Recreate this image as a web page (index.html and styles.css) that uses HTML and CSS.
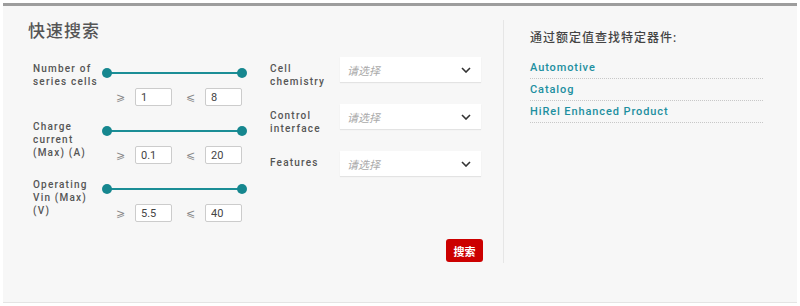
FILE: index.html
```html
<!DOCTYPE html>
<html lang="zh-CN">

<head>
    <meta charset="UTF-8">
    <meta name="viewport" content="width=device-width, initial-scale=1.0">
    <title>快速搜索</title>
    <link rel="stylesheet" href="styles.css">
</head>

<body>
    <div class="panel">
        <div class="main">
            <h2 class="title">快速搜索</h2>
            <div class="form">
                <div class="ranges">
                    <div class="range-row">
                        <div class="label">Number of<br>series cells</div>
                        <div class="range">
                            <div class="slider"><span class="dot"></span><span class="dot"></span></div>
                            <div class="limits">
                                <span class="sign">⩾</span><input type="text" value="1">
                                <span class="sign">⩽</span><input type="text" value="8">
                            </div>
                        </div>
                    </div>
                    <div class="range-row">
                        <div class="label">Charge<br>current<br>(Max) (A)</div>
                        <div class="range">
                            <div class="slider"><span class="dot"></span><span class="dot"></span></div>
                            <div class="limits">
                                <span class="sign">⩾</span><input type="text" value="0.1">
                                <span class="sign">⩽</span><input type="text" value="20">
                            </div>
                        </div>
                    </div>
                    <div class="range-row">
                        <div class="label">Operating<br>Vin (Max)<br>(V)</div>
                        <div class="range">
                            <div class="slider"><span class="dot"></span><span class="dot"></span></div>
                            <div class="limits">
                                <span class="sign">⩾</span><input type="text" value="5.5">
                                <span class="sign">⩽</span><input type="text" value="40">
                            </div>
                        </div>
                    </div>
                </div>

                <div class="selects">
                    <div class="select-row">
                        <div class="label">Cell<br>chemistry</div>
                        <div class="select">
                            <span class="placeholder">请选择</span>
                            <svg width="10" height="6" viewBox="0 0 10 6"><path d="M1 1l4 4 4-4" fill="none" stroke="#333" stroke-width="1.6"/></svg>
                        </div>
                    </div>
                    <div class="select-row">
                        <div class="label">Control<br>interface</div>
                        <div class="select">
                            <span class="placeholder">请选择</span>
                            <svg width="10" height="6" viewBox="0 0 10 6"><path d="M1 1l4 4 4-4" fill="none" stroke="#333" stroke-width="1.6"/></svg>
                        </div>
                    </div>
                    <div class="select-row">
                        <div class="label">Features</div>
                        <div class="select">
                            <span class="placeholder">请选择</span>
                            <svg width="10" height="6" viewBox="0 0 10 6"><path d="M1 1l4 4 4-4" fill="none" stroke="#333" stroke-width="1.6"/></svg>
                        </div>
                    </div>
                    <button class="search-btn">搜索</button>
                </div>
            </div>
        </div>

        <div class="side">
            <h3>通过额定值查找特定器件:</h3>
            <ul class="links">
                <li><a href="#">Automotive</a></li>
                <li><a href="#">Catalog</a></li>
                <li><a href="#">HiRel Enhanced Product</a></li>
            </ul>
        </div>
    </div>
</body>

</html>
```

FILE: styles.css
```css
body {
    margin: 0;
    background-color: #fff;
    font-family: Roboto, "Noto Sans CJK SC", sans-serif;
    color: #555;
}

.panel {
    display: flex;
    margin: 3px 3px 0;
    height: 296px;
    background-color: #f7f7f7;
    border-top: 3px solid #9d9d9d;
    border-bottom: 1px solid #e4e4e4;
}

.main {
    width: 500px;
    padding: 13px 0 0 25px;
    box-sizing: border-box;
}

.title {
    margin: 0;
    font-size: 17px;
    line-height: 24px;
    font-weight: 500;
    color: #555;
    letter-spacing: 1px;
}

.form {
    display: flex;
    margin-top: 14px;
}

.label {
    font-size: 10px;
    line-height: 13px;
    font-weight: 500;
    letter-spacing: 1.2px;
    color: #555;
}

/* range sliders */
.ranges {
    width: 237px;
    padding: 5px 0 0 5px;
}

.range-row {
    display: flex;
    height: 58px;
}

.range-row .label {
    width: 69px;
}

.range {
    padding-top: 6px;
}

.slider {
    position: relative;
    width: 145px;
    height: 10px;
    display: flex;
    justify-content: space-between;
    align-items: center;
}

.slider::before {
    content: "";
    position: absolute;
    left: 4px;
    right: 4px;
    top: 4px;
    height: 2px;
    background-color: #1b8e96;
}

.dot {
    position: relative;
    width: 10px;
    height: 10px;
    border-radius: 50%;
    background-color: #16878f;
}

.limits {
    display: flex;
    align-items: center;
    margin-top: 10px;
    padding-left: 14px;
}

.sign {
    width: 19px;
    font-family: "DejaVu Sans", sans-serif;
    font-size: 11px;
    color: #888;
}

.limits input {
    width: 37px;
    height: 18px;
    box-sizing: border-box;
    margin: 0 14px 0 0;
    padding: 0 5px;
    border: 1px solid #ccc;
    border-radius: 2px;
    background-color: #fff;
    font-family: Roboto, sans-serif;
    font-size: 11px;
    color: #444;
}

/* dropdowns */
.selects {
    display: flex;
    flex-direction: column;
}

.select-row {
    display: flex;
    height: 47px;
}

.select-row .label {
    width: 70px;
    padding-top: 5px;
}

.select {
    width: 141px;
    height: 25px;
    box-sizing: border-box;
    padding: 0 10px 0 7px;
    display: flex;
    align-items: center;
    justify-content: space-between;
    background-color: #fff;
    box-shadow: 0 1px 1px rgba(0, 0, 0, 0.08);
}

.placeholder {
    font-size: 11px;
    font-style: italic;
    color: #aaa;
}

.search-btn {
    align-self: flex-end;
    margin: 41px -2px 0 0;
    width: 37px;
    height: 23px;
    padding: 0;
    border: none;
    border-radius: 3px;
    background-color: #cc0000;
    color: #fff;
    font-family: "Noto Sans CJK SC", sans-serif;
    font-size: 11px;
    font-weight: bold;
    cursor: pointer;
}

/* right column */
.side {
    margin-top: 14px;
    height: 243px;
    padding: 10px 0 0 26px;
    border-left: 1px solid #e6e6e6;
    box-sizing: border-box;
}

.side h3 {
    margin: 0 0 11px;
    font-size: 12px;
    line-height: 16px;
    font-weight: 500;
    letter-spacing: 1px;
    color: #444;
}

.links {
    list-style: none;
    margin: 0;
    padding: 0;
    width: 233px;
}

.links li {
    height: 22px;
    box-sizing: border-box;
    padding-top: 4px;
    line-height: 14px;
    border-bottom: 1px dotted #c8c8c8;
}

.links a {
    display: block;
    font-size: 11px;
    font-weight: 500;
    letter-spacing: 0.9px;
    color: #1d8fa0;
    text-decoration: none;
}
```
